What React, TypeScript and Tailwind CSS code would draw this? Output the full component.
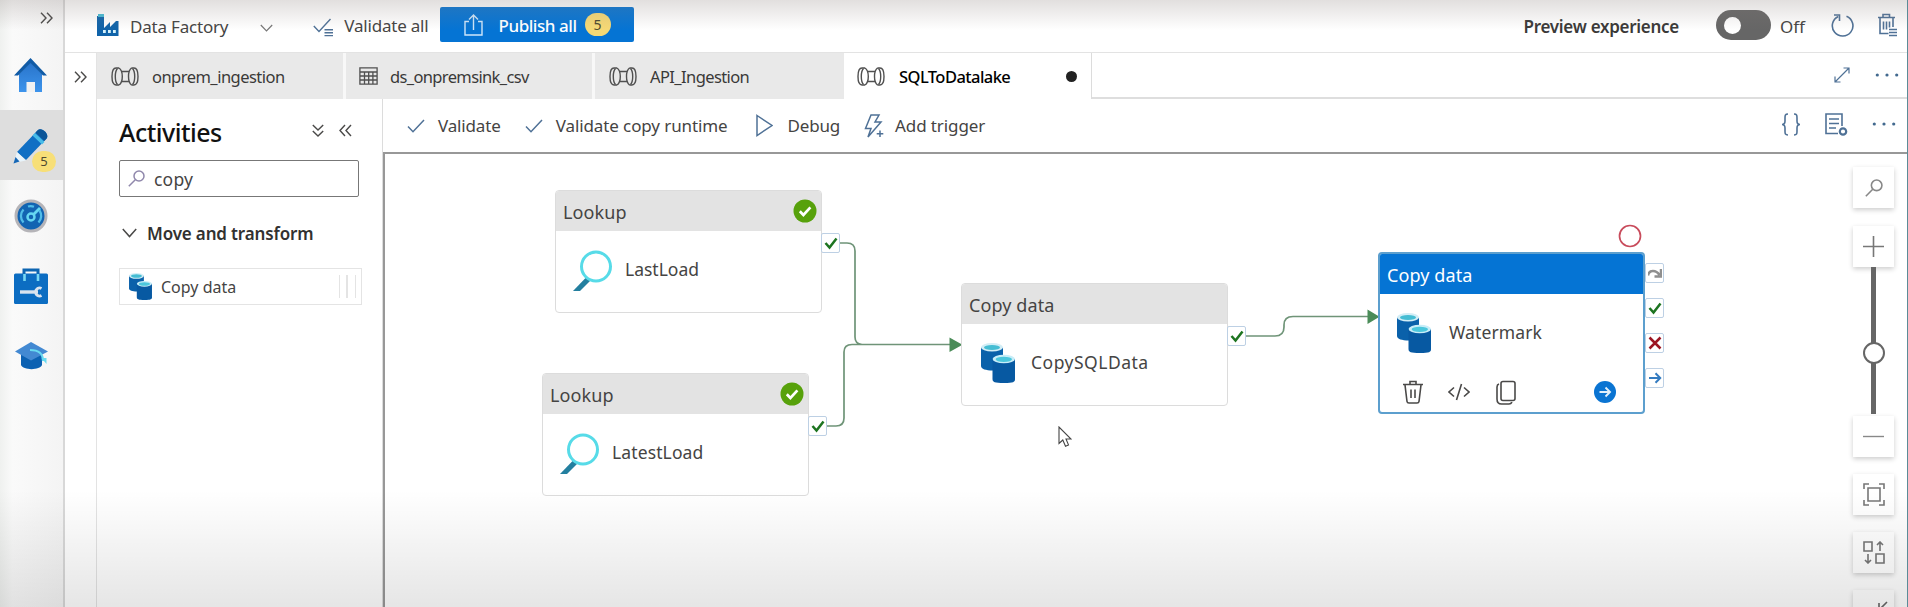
import React from "react";

const TEXT = "#454443";
type P = { children?: React.ReactNode; className?: string };

function Label({ children, className = "" }: P) {
  return <span className={`block whitespace-nowrap leading-none ${className}`}>{children}</span>;
}

/* ---------- icons ---------- */
function Icon({ w, h, vb, className = "", children, sw = 1.4, color = "#4a4948" }: { w: number; h: number; vb?: string; className?: string; children: React.ReactNode; sw?: number; color?: string }) {
  return (
    <svg width={w} height={h} viewBox={vb ?? `0 0 ${w} ${h}`} fill="none" stroke={color} strokeWidth={sw} className={`shrink-0 ${className}`}>
      {children}
    </svg>
  );
}
const DoubleRight = () => <Icon w={13} h={12} sw={1.4}><path d="M1 .8 6 6 1 11.2M7 .8 12 6 7 11.2" /></Icon>;
const DoubleLeft = () => <Icon w={13} h={13} sw={1.4}><path d="M6 1 1 6.5 6 12M12 1 7 6.5 12 12" /></Icon>;
const DoubleDown = () => <Icon w={12} h={13} sw={1.4}><path d="M.8 1 6 6 11.2 1M.8 7 6 12 11.2 7" /></Icon>;
const Pipe = () => (
  <Icon w={28} h={19} sw={1.4} color="#505050">
    <path d="M5 1C2.500 1 1 4.500 1 9.500S2.500 18 5 18h3M5 1h3" />
    <path d="M6.500 1.500C5 3 4.300 6 4.300 9.500S5 16 6.500 17.500" />
    <path d="M8 1c2.300 1.500 3.300 4.500 3.300 8.500S10.300 16.500 8 18" />
    <path d="M10.800 4.500H18M10.800 14.500H18" />
    <path d="M20.500 1c-2 1.500-3 4.500-3 8.500s1 7 3 8.500M20.500 1H23M20.500 18H23M23 1c2.500 0 4 3.500 4 8.500S25.500 18 23 18" />
    <path d="M21.500 1.500C23 3 23.700 6 23.700 9.500S23 16 21.500 17.500" />
  </Icon>
);
const Table = () => (
  <Icon w={19} h={18} sw={1.3} color="#505050"><path d="M.9.900h17.200v16.200H.9zM.9 5h17.200M.9 9h17.200M.9 13h17.200M5.500 5v12M9.700 5v12M13.900 5v12" /></Icon>
);
const Check = () => <Icon w={18} h={14} sw={1.5} color="#4f7196"><path d="M1 7.500 6 12.700 17 1" /></Icon>;
const Glass = ({ size = 17, color = "#9088ac" }: { size?: number; color?: string }) => (
  <Icon w={size} h={size} vb="0 0 17 17" sw={1.5} color={color}><circle cx="11" cy="6" r="5" /><path d="M7.300 9.700.8 16.300" /></Icon>
);
const Databases = ({ w, h }: { w: number; h: number }) => (
  <svg width={w} height={h} viewBox="0 0 34 40" className="shrink-0">
    <path d="M0 4v19c0 3 5 4.500 11.500 4.500S22 26 22 23V4z" fill="#0a61aa" />
    <ellipse cx="11" cy="4.300" rx="11" ry="4.300" fill="#d3eef6" />
    <ellipse cx="11" cy="4.500" rx="8" ry="2.600" fill="#45bdd3" />
    <path d="M11.500 16v20c0 3 2 4 11.500 4S34 39 34 36V16z" fill="#0759a2" />
    <ellipse cx="22.800" cy="16" rx="11.200" ry="4.300" fill="#c8edf8" />
    <ellipse cx="22.800" cy="16.300" rx="8.200" ry="2.600" fill="#4bc7dc" />
  </svg>
);
const Magnifier = () => (
  <svg width="40" height="43" viewBox="0 0 40 43" className="shrink-0">
    <path d="M0 42 13.500 28 18 31 7 42z" fill="#237f9f" />
    <circle cx="23" cy="17.500" r="14.500" fill="#fff" stroke="#57dbe8" strokeWidth="3" />
  </svg>
);
const Dots = () => (
  <svg width="24" height="4" viewBox="0 0 24 4" fill="#42698f" className="shrink-0"><circle cx="2.300" cy="2" r="1.600" /><circle cx="12" cy="2" r="1.600" /><circle cx="21.700" cy="2" r="1.600" /></svg>
);

/* ---------- left rail ---------- */
function Rail() {
  return (
    <nav className="flex h-full w-[65px] shrink-0 flex-col border-r-2 border-[#d8d8d8] bg-linear-to-r from-[#eff1ef] via-[#fafafa] via-20% to-[#f4f4f4]">
      <div className="flex h-[50px] items-start pl-[40px] pt-[12px]"><DoubleRight /></div>
      <div className="flex h-[60px] items-start pl-[14px] pt-[8px]">
        <svg width="33" height="35" viewBox="0 0 33 35">
          <defs><linearGradient id="home" x1="0" y1="0" x2="0" y2="1"><stop offset="0" stopColor="#2873c9" /><stop offset="1" stopColor="#3d94ec" /></linearGradient></defs>
          <path d="M5 16 16.500 4 28 16v18H5z" fill="url(#home)" />
          <path d="M0 17.500 16.500 0 33 17.500h-4L16.500 5 4 17.500z" fill="#115ba6" />
          <path d="M12.500 24H21v10h-8.500z" fill="#f2f2f2" />
        </svg>
      </div>
      <div className="flex h-[70px] items-start bg-[#dedede] pl-[13px] pt-[17px]">
        <div className="relative">
          <svg width="36" height="37" viewBox="0 0 36 37">
            <path d="M4 25 25 3c3-3 11 3 9 8L13 33z" fill="#106fc4" />
            <path d="M25 3c3-3 11 3 9 8l-2.500 3-9-8.500z" fill="#0b5598" />
            <path d="M22 6l9.500 9-2.500 2.500-9.500-9z" fill="#48bce8" />
            <path d="M4 25l9 8.500L.8 36z" fill="#e8f4fb" /><path d="M2.500 30l4 4.500L.5 36.500z" fill="#1566b5" />
          </svg>
          <span className="absolute left-[19px] top-[24px] flex h-[21px] w-[24px] items-center justify-center rounded-full bg-[#f7df78] text-[13px] text-[#4d4930]">5</span>
        </div>
      </div>
      <div className="flex h-[70px] items-start pl-[14px] pt-[19px]">
        <svg width="34" height="34" viewBox="0 0 34 34" fill="none">
          <circle cx="17" cy="17" r="15" fill="#1264b2" stroke="#b5b4b8" strokeWidth="3" />
          <path d="M9.500 23.500a9.500 9.500 0 0 1 0-13M14 7.500q3-1 6 .3M25.500 11.500a9.500 9.500 0 0 1-1 12" stroke="#51bde8" strokeWidth="2.300" />
          <circle cx="17" cy="18" r="3.500" stroke="#66d7f1" strokeWidth="2.500" /><path d="M19.500 15.500 26 9" stroke="#66d7f1" strokeWidth="2.800" />
        </svg>
      </div>
      <div className="flex h-[75px] items-start pl-[14px] pt-[18px]">
        <svg width="34" height="36" viewBox="0 0 34 36" fill="none">
          <path d="M10 8V2h14v6" stroke="#0d65b1" strokeWidth="3" />
          <rect y="5.500" width="34" height="30.500" rx="1.500" fill="#0c6dc2" />
          <path d="M10.500 6v7M24 6v7" stroke="#79d8f3" strokeWidth="2.600" />
          <path d="M6 24h18" stroke="#dae3ee" strokeWidth="3.400" /><path d="M27.500 20.500a4 4 0 1 0 0 7" stroke="#dae3ee" strokeWidth="2.800" />
        </svg>
      </div>
      <div className="flex items-start pl-[15px] pt-[17px]">
        <svg width="33" height="28" viewBox="0 0 33 28">
          <path d="M6 12v11c2 5.500 19 5.500 21 0V12z" fill="#0c61b2" />
          <path d="M0 9.500 16 0l17 9.500-17 9z" fill="#4389d2" />
          <path d="M15 8c8 0 13 3 13 11" fill="none" stroke="#68daf0" strokeWidth="2.200" /><path d="M26.500 16h5v6z" fill="#68daf0" />
        </svg>
      </div>
    </nav>
  );
}

/* ---------- top bar ---------- */
function TopBar() {
  return (
    <header className="flex h-[53px] shrink-0 items-start border-b-[1.500px] border-[#e3e3e3] bg-white">
      <svg width="22" height="22" viewBox="0 0 22 22" className="ml-[32px] mt-[14px] shrink-0">
        <path d="M0 2h7v12l6-6v5l6-6h2.500v15H0z" fill="#1063a9" /><path d="M1 0h6v3H1z" fill="#47bbd5" />
        <path d="M6 16h2.800v3H6zM11 16h2.800v3H11zM16 16h2.800v3H16z" fill="#d6f2fb" />
      </svg>
      <Label className="ml-[11px] mt-[18px] text-[17px] tracking-[-0.200px]">Data Factory</Label>
      <Icon w={13} h={8} className="ml-[32px] mt-[24px]" sw={1.2} color="#777"><path d="m.8 1 5.700 6 5.700-6" /></Icon>
      <Icon w={21} h={19} className="ml-[40px] mt-[18px]" sw={1.4} color="#4f7196"><path d="m.8 8 5.200 5.500L17.500 1" /><path d="M11.500 11.800H20M11.500 14.700H20M11.500 17.600H20" /></Icon>
      <Label className="ml-[10px] mt-[17px] text-[17px] tracking-[-0.200px]">Validate all</Label>
      <button className="ml-[11px] mt-[7px] flex h-[35px] w-[194px] items-center rounded-[2px] bg-[#0574d4] text-white">
        <Icon w={19} h={22} className="ml-[24px]" sw={1.4} color="#cfe6fa"><path d="M5 7.500H1V21h17V7.500h-4M9.500 16V1M5 5.500 9.500 1 14 5.500" /></Icon>
        <Label className="ml-[16px] mt-[2px] text-[17px] font-medium tracking-[-0.450px]">Publish all</Label>
        <span className="ml-[8px] flex h-[23px] w-[26px] items-center justify-center rounded-full bg-[#f6d975] text-[14px] text-[#4d4930]">5</span>
      </button>
      <div className="ml-auto flex h-[52px] items-start">
        <Label className="mt-[18px] text-[17px] font-semibold tracking-[-0.280px] text-[#3a3938]">Preview experience</Label>
        <span className="ml-[37px] mt-[10px] flex h-[30px] w-[55px] items-center rounded-full bg-[#666]"><span className="ml-[8px] size-[17px] rounded-full bg-white" /></span>
        <Label className="ml-[9px] mt-[18px] text-[17px]">Off</Label>
        <Icon w={23} h={24} className="ml-[26px] mt-[13px]" sw={1.600} color="#4f7196"><path d="M7.300 3.400A10.300 10.300 0 1 0 15.500 3.200" /><path d="M3 2h5.500v6" /></Icon>
        <Icon w={20} h={24} className="ml-[23px] mr-[11px] mt-[13px]" sw={1.600} color="#4f7196"><path d="M1 4.500h17M6 4V1.500h6.500V4M3 5v15.500h8.500M16 5v9M6.500 8.500v8M9.500 8.500v8M12.500 8.500v6M12 16.500h8M12 19.500h8M12 22.500h8" /></Icon>
      </div>
    </header>
  );
}

function Tab({ icon, name, className = "", label = "" }: { icon: React.ReactNode; name: string; className?: string; label?: string }) {
  return <div className={`flex shrink-0 items-center border-r-[3px] border-[#f8f8f8] bg-[#e9e9e9] ${className}`}>{icon}<Label className={`mt-[2px] text-[16.500px] text-[#3a3938] ${label}`}>{name}</Label></div>;
}

function Tabs() {
  return (
    <div className="flex h-[46px] shrink-0">
      <Tab icon={<Pipe />} name="onprem_ingestion" className="w-[249px] pl-[14px]" label="ml-[13px] tracking-[-0.530px]" />
      <Tab icon={<Table />} name="ds_onpremsink_csv" className="w-[249px] pl-[13px]" label="ml-[12px] tracking-[-0.640px]" />
      <Tab icon={<Pipe />} name="API_Ingestion" className="w-[249px] border-r-0! pl-[14px]" label="ml-[13px] tracking-[-0.600px]" />
      <div className="flex w-[248px] shrink-0 items-center border-r-[1.500px] border-[#dcdcdc] pl-[13px]">
        <Pipe /><Label className="ml-[14px] mt-[2px] text-[16.500px] font-medium tracking-[-0.560px] text-black">SQLToDatalake</Label>
        <span className="ml-auto mr-[14px] size-[11px] rounded-full bg-[#222]" />
      </div>
      <div className="flex flex-1 items-center justify-end border-b-2 border-[#dedede] pr-[9px]">
        <Icon w={16} h={16} sw={1.2} color="#4f7196"><path d="M1 15 15 1M9.500 1H15v5.500M6.500 15H1V9.500" /></Icon>
        <span className="ml-[25px]"><Dots /></span>
      </div>
    </div>
  );
}

function Activities() {
  return (
    <aside className="flex w-[285px] shrink-0 flex-col">
      <div className="flex h-[60px] items-start">
        <Label className="ml-[22px] mt-[21px] text-[25px] font-medium tracking-[-0.500px] text-[#111]">Activities</Label>
        <span className="ml-auto mt-[25px]"><DoubleDown /></span>
        <span className="ml-[15px] mr-[30px] mt-[25px]"><DoubleLeft /></span>
      </div>
      <div className="ml-[22px] mt-px flex h-[37px] w-[240px] items-center rounded-[2px] border-[1.500px] border-[#777]">
        <span className="ml-[8px]"><Glass /></span><Label className="ml-[9px] mt-[2px] text-[17.500px] tracking-[0.200px]">copy</Label>
      </div>
      <div className="ml-[25px] mt-[24px] flex h-[24px] items-center">
        <Icon w={15} h={10} sw={1.5}><path d="m.8 1 6.700 7.500L14.200 1" /></Icon>
        <Label className="ml-[10px] text-[17px] font-semibold tracking-[-0.150px] text-[#323130]">Move and transform</Label>
      </div>
      <div className="ml-[22px] mt-[23px] flex h-[37px] w-[243px] items-center border-[1.500px] border-[#e4e4e4] bg-white">
        <span className="ml-[9px]"><Databases w={23} h={27} /></span><Label className="ml-[9px] text-[16px]">Copy data</Label>
        <span className="ml-auto mr-[5px] flex h-[23px] w-[17px] justify-between border-x-[1.500px] border-[#e4e4e4] px-[6px]"><span className="w-[1.500px] bg-[#e4e4e4]" /></span>
      </div>
    </aside>
  );
}

function Toolbar() {
  return (
    <div className="flex h-[53px] shrink-0 items-center">
      <span className="ml-[24px]"><Check /></span><Label className="ml-[13px] text-[17px] tracking-[-0.150px]">Validate</Label>
      <span className="ml-[24px]"><Check /></span><Label className="ml-[13px] text-[17px] tracking-[-0.100px]">Validate copy runtime</Label>
      <Icon w={17} h={23} className="ml-[28px]" sw={1.5} color="#4f7196"><path d="M1 1.500 16 11.500 1 21.500z" /></Icon>
      <Label className="ml-[15px] text-[17px] tracking-[-0.200px]">Debug</Label>
      <Icon w={20} h={24} className="ml-[24px]" sw={1.5} color="#4f7196"><path d="M7 1h8l-4 7h6L4 23l3-8.500H1.500zM16 16.500V23M12.700 19.700h6.600" /></Icon>
      <Label className="ml-[11px] text-[17px] tracking-[-0.100px]">Add trigger</Label>
      <div className="ml-auto mr-[12px] flex items-center gap-[24px]">
        <Icon w={20} h={23} className="-mt-[3px]" sw={1.600} color="#4f7196"><path d="M7 1C4 1 4 2.500 4 5v3c0 2-1 3.500-3 3.500 2 0 3 1.500 3 3.500v3c0 2.500 0 4 3 4M13 1c3 0 3 1.500 3 4v3c0 2 1 3.500 3 3.500-2 0-3 1.500-3 3.500v3c0 2.500 0 4-3 4" /></Icon>
        <Icon w={23} h={23} className="-mt-[2px]" sw={1.600} color="#4f7196"><path d="M13 20.500H1V1h16v12M4 6h10M4 10.500h10M4 15h7" /><circle cx="18" cy="18.500" r="3.200" strokeWidth="2.200" /></Icon>
        <span className="-mt-[3px]"><Dots /></span>
      </div>
    </div>
  );
}

/* ---------- canvas ---------- */
function Status() {
  return <svg width="24" height="24" viewBox="0 0 24 24" fill="none"><circle cx="12" cy="12" r="11.500" fill="#57a10b" /><path d="m6.800 12.300 3.600 3.700 7-7.600" stroke="#fff" strokeWidth="2.700" /></svg>;
}

function Node({ place, title, name, icon, done = false, selected = false, tracking = "" }: { place: string; title: string; name: string; icon: React.ReactNode; done?: boolean; selected?: boolean; tracking?: string }) {
  return (
    <div className={`absolute flex w-[267px] flex-col overflow-hidden rounded-[4px] bg-white ${selected ? "h-[162px] border-2 border-[#5c9fce]" : "h-[123px] border-[1.500px] border-[#dcdcdc]"} ${place}`}>
      <div className={`flex h-[40px] shrink-0 items-center justify-between pl-[7px] pr-[4px] ${selected ? "bg-[#0574d4] text-white" : "bg-[#e3e3e3]"}`}>
        <Label className="mt-[2px] text-[18px] tracking-[0.100px]">{title}</Label>{done && <Status />}
      </div>
      <div className="flex h-[78px] shrink-0 items-center pl-[17px]">
        <div className="flex w-[52px] items-center">{icon}</div>
        <Label className={`text-[17.500px] ${tracking}`}>{name}</Label>
      </div>
      {selected && (
        <div className="flex h-[40px] shrink-0 items-center pl-[22px]">
          <Icon w={22} h={24} sw={1.600}><path d="M1 4.500h20M8 4V1.500h6V4M3 5l2 16.500Q5.200 23 7 23h8q1.800 0 2-1.500L19 5M9 9.500v8.500M13 9.500v8.500" /></Icon>
          <Icon w={22} h={18} className="ml-[24px]" sw={1.600}><path d="M6 4.500 1 9l5 4.500M16 4.500 21 9l-5 4.500M13.500 1 8.500 17" /></Icon>
          <Icon w={20} h={25} className="ml-[26px]" sw={1.600}><rect x="5" y="1.500" width="14" height="19" rx="2" /><path d="M3 4C1.500 4.500 1 5.500 1 7v12c0 3 1.500 5 4.500 5H13q2 0 3-1.800" /></Icon>
          <svg width="22" height="22" viewBox="0 0 22 22" fill="none" className="ml-[78px]"><circle cx="11" cy="11" r="11" fill="#0a74d2" /><path d="M5.500 11h10M11.500 6.500 16 11l-4.500 4.500" stroke="#e2f0fb" strokeWidth="1.900" /></svg>
        </div>
      )}
    </div>
  );
}

function Port({ place, kind = "check" }: { place: string; kind?: string }) {
  return (
    <div className={`absolute flex h-[20px] w-[19px] items-center justify-center rounded-[2px] border-[1.500px] border-[#bdd0e4] bg-white ${place}`}>
      <svg width="14" height="14" viewBox="0 0 14 14" fill="none" strokeWidth="2.500" className="shrink-0">
        {kind === "check" && <path d="m1.500 7 4 4.500 7-9" stroke="#1d7420" />}
        {kind === "cross" && <path d="m1.500 1.500 11 11M12.500 1.500l-11 11" stroke="#9c1523" />}
        {kind === "arrow" && <path d="M1 7h11M7.500 2.300 12.200 7l-4.700 4.700" stroke="#337bc0" strokeWidth="2" />}
        {kind === "skip" && <path d="M0 9.500c1-6 8-6 11.500-.5M13 3v7.500H6.500" stroke="#8f8f8f" />}
      </svg>
    </div>
  );
}

function ZoomButton({ children, className = "" }: P) {
  return <div className={`flex h-[41px] w-[41px] shrink-0 items-center justify-center bg-white shadow-[0_2px_5px_rgba(0,0,0,0.200)] ${className}`}>{children}</div>;
}

function Canvas() {
  return (
    <main className="relative flex-1 overflow-hidden border-l-2 border-t-2 border-[#989898] bg-white">
      <div className="absolute inset-x-0 bottom-0 top-px">
        <svg width="1520" height="452" viewBox="385 155 1520 452" fill="none" stroke="#6f9478" strokeWidth="1.700" className="absolute left-0 top-0">
          <path d="M838 243h9q8 0 8 8v86q0 7 7 7.500h90M825 426h11q8 0 8-8v-66q0-7.500 8-7.500h20M1244 336h31q9 0 9-9v-2q0-8.500 9-8.500h75" />
          <path d="M949.500 337.500v14.500l13-7.200zM1367.500 309.500v14.500l12-7.200z" fill="#4a8c58" stroke="none" />
          <circle cx="1630" cy="236" r="10.500" stroke="#c84b5b" />
        </svg>
        <Node place="left-[170px] top-[35px]" title="Lookup" name="LastLoad" done icon={<Magnifier />} />
        <Node place="left-[157px] top-[218px]" title="Lookup" name="LatestLoad" done icon={<Magnifier />} tracking="tracking-[0.120px]" />
        <Node place="left-[576px] top-[128px]" title="Copy data" name="CopySQLData" tracking="tracking-[0.500px]" icon={<span className="ml-[2px]"><Databases w={34} h={40} /></span>} />
        <Node place="left-[993px] top-[97px]" title="Copy data" name="Watermark" selected tracking="tracking-[0.120px]" icon={<Databases w={34} h={40} />} />
        <Port place="left-[436px] top-[78px]" />
        <Port place="left-[423px] top-[261px]" />
        <Port place="left-[842px] top-[171px]" />
        <Port place="left-[1260px] top-[108px]" kind="skip" />
        <Port place="left-[1260px] top-[143px]" />
        <Port place="left-[1260px] top-[178px]" kind="cross" />
        <Port place="left-[1260px] top-[213px]" kind="arrow" />
        <svg width="14" height="22" viewBox="0 0 14 22" className="absolute left-[673px] top-[271px]" fill="#fff" stroke="#444" strokeWidth="1.100"><path d="M1 1v16.500l3.800-3.500 2.700 6.200 3-1.300L8 13h5z" /></svg>
      </div>
      <div className="absolute right-[14px] top-[13px] flex w-[41px] flex-col items-center">
        <ZoomButton><Glass size={18} color="#888" /></ZoomButton>
        <ZoomButton className="mt-[18px]"><Icon w={21} h={21} sw={1.600} color="#777"><path d="M10.500 0v21M0 10.500h21" /></Icon></ZoomButton>
        <div className="flex h-[147px] w-[5px] flex-col items-center bg-[#666]"><span className="mt-[75px] size-[22px] shrink-0 rounded-full border-2 border-[#666] bg-white" /></div>
        <ZoomButton className="mt-[2px]"><Icon w={21} h={3} sw={1.4} color="#888"><path d="M0 1.500h21" /></Icon></ZoomButton>
        <ZoomButton className="mt-[17px]"><Icon w={22} h={23} sw={1.600} color="#777"><path d="M1 6V1h5M16 1h5v5M21 17v5h-5M6 22H1v-5M5 5h12v13H5z" /></Icon></ZoomButton>
        <ZoomButton className="mt-[17px]"><Icon w={22} h={23} sw={1.600} color="#777"><path d="M1 1h8v9H1zM13 13h8v9h-8zM17 10V1M14 4l3-3 3 3M5 13v9M2 19l3 3 3-3" /></Icon></ZoomButton>
        <ZoomButton className="mt-[17px] items-start!"><Icon w={20} h={20} className="ml-[8px] mt-[11px]" sw={1.600} color="#666"><path d="M19 1 12 8M11 2v6h6M1 19l7-7" /></Icon></ZoomButton>
      </div>
    </main>
  );
}

export default function App() {
  return (
    <div className="relative flex h-[607px] w-[1908px] overflow-hidden bg-white font-['Noto_Sans','Open_Sans',sans-serif]" style={{ color: TEXT }}>
      <Rail />
      <div className="flex min-w-0 flex-1 flex-col">
        <TopBar />
        <div className="flex min-h-0 flex-1">
          <div className="flex w-[32px] shrink-0 items-start border-r-[1.500px] border-[#e3e3e3] pl-[9px] pt-[18px]"><DoubleRight /></div>
          <div className="flex min-w-0 flex-1 flex-col">
            <Tabs />
            <div className="flex min-h-0 flex-1">
              <Activities />
              <div className="flex min-w-0 flex-1 flex-col border-l border-[#dcdcdc]">
                <Toolbar />
                <Canvas />
              </div>
            </div>
          </div>
        </div>
      </div>
      <div className="pointer-events-none absolute inset-x-0 top-0 h-[30px] bg-linear-to-b from-[#8a7f7c]/25 to-transparent" />
      <div className="pointer-events-none absolute inset-x-0 bottom-0 h-[117px] bg-linear-to-b from-transparent to-black/10" />
      <div className="pointer-events-none absolute inset-y-0 right-0 w-px bg-[#5b8c98]" />
    </div>
  );
}
